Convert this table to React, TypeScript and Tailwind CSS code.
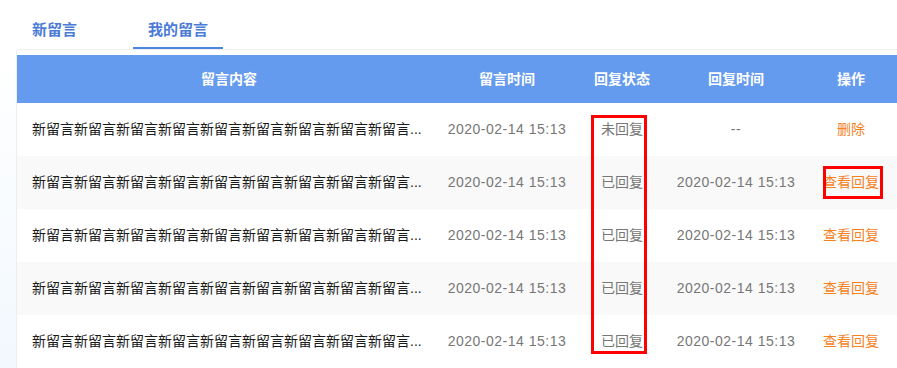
type Message = {
  content: string;
  createdAt: string;
  replied: boolean;
  repliedAt?: string;
};

const messages: Message[] = [
  { content: "新留言".repeat(12), createdAt: "2020-02-14 15:13", replied: false },
  { content: "新留言".repeat(12), createdAt: "2020-02-14 15:13", replied: true, repliedAt: "2020-02-14 15:13" },
  { content: "新留言".repeat(12), createdAt: "2020-02-14 15:13", replied: true, repliedAt: "2020-02-14 15:13" },
  { content: "新留言".repeat(12), createdAt: "2020-02-14 15:13", replied: true, repliedAt: "2020-02-14 15:13" },
  { content: "新留言".repeat(12), createdAt: "2020-02-14 15:13", replied: true, repliedAt: "2020-02-14 15:13" },
];

// keep the preview to one line
const preview = (text: string) => (text.length > 27 ? text.slice(0, 27) + "..." : text);

export default function App() {
  return (
    <div className="relative w-[897px] h-[368px] overflow-hidden bg-white font-['Liberation_Sans','Noto_Sans_CJK_SC',sans-serif]">
      {/* Tabs */}
      <div className="ml-[17px] flex h-[50px] border-b border-[#eeeeee]">
        <div className="px-[15px] pt-[19px] text-[15px] leading-[22px] font-bold text-[#4a7bd6]">新留言</div>
        <div className="ml-[41px] px-[15px] pt-[19px] text-[15px] leading-[22px] font-bold text-[#4a7bd6] border-b-2 border-[#4a86e0] h-[49px]">
          我的留言
        </div>
      </div>

      <div className="flex">
        <div className="w-[17px] shrink-0 h-[318px] border-r border-[#eeeeee] bg-gradient-to-b from-white to-[#f2f8fe]" />
        <div className="pt-[5px] shrink-0">
          <table className="table-fixed w-[884px] border-collapse text-[14px]">
            <colgroup>
              <col className="w-[424px]" />
              <col className="w-[132px]" />
              <col className="w-[98px]" />
              <col className="w-[130px]" />
              <col className="w-[100px]" />
            </colgroup>
            <thead>
              <tr className="h-[48px] bg-[#659bef] text-white font-bold">
                <th className="font-bold">留言内容</th>
                <th className="font-bold">留言时间</th>
                <th className="font-bold">回复状态</th>
                <th className="font-bold">回复时间</th>
                <th className="font-bold">操作</th>
              </tr>
            </thead>
            <tbody>
              {messages.map((m, i) => (
                <tr key={i} className={`h-[53px] ${i % 2 === 1 ? "bg-[#f9f9f9]" : "bg-white"}`}>
                  <td className="pl-[15px] text-[#1a1a1a] whitespace-nowrap overflow-hidden">{preview(m.content)}</td>
                  <td className="text-center text-[#777777] tracking-[0.5px]">{m.createdAt}</td>
                  <td className="text-center text-[#777777]">{m.replied ? "已回复" : "未回复"}</td>
                  <td className="text-center text-[#777777] tracking-[0.5px]">{m.repliedAt ?? "--"}</td>
                  <td className="text-center text-[#f5821f]">{m.replied ? "查看回复" : "删除"}</td>
                </tr>
              ))}
            </tbody>
          </table>
        </div>
      </div>

      {/* highlight frames */}
      <div className="absolute left-[591px] top-[115px] w-[56px] h-[239px] border-[3px] border-[#ff0000]" />
      <div className="absolute left-[823px] top-[166px] w-[60px] h-[33px] border-[3px] border-[#ff0000]" />
    </div>
  );
}
